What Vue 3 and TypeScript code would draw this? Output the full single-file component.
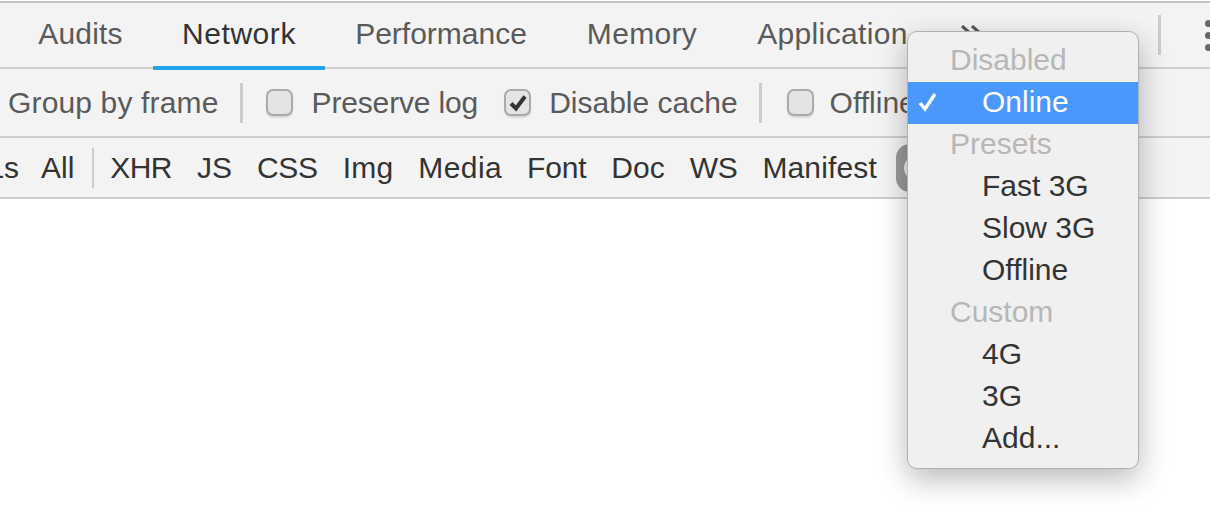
<script setup lang="ts">
interface MenuRow { label: string; kind: 'head' | 'item' | 'active' }
interface Tab { label: string; width: number; spacing: number }
interface Filter { label: string; spacing: number }
const tabs: Tab[] = [
  { label: 'Audits', width: 145, spacing: 0.15 },
  { label: 'Network', width: 172, spacing: 0.55 },
  { label: 'Performance', width: 232, spacing: 0 },
  { label: 'Memory', width: 170, spacing: 0.33 },
  { label: 'Application', width: 211, spacing: 0.36 },
]
const filters: Filter[] = [
  { label: 'XHR', spacing: -0.6 },
  { label: 'JS', spacing: 0 },
  { label: 'CSS', spacing: -0.3 },
  { label: 'Img', spacing: 0.2 },
  { label: 'Media', spacing: 0.4 },
  { label: 'Font', spacing: -0.2 },
  { label: 'Doc', spacing: 0 },
  { label: 'WS', spacing: -0.3 },
  { label: 'Manifest', spacing: 0.15 },
]
const rows: MenuRow[] = [
  { label: 'Disabled', kind: 'head' },
  { label: 'Online', kind: 'active' },
  { label: 'Presets', kind: 'head' },
  { label: 'Fast 3G', kind: 'item' },
  { label: 'Slow 3G', kind: 'item' },
  { label: 'Offline', kind: 'item' },
  { label: 'Custom', kind: 'head' },
  { label: '4G', kind: 'item' },
  { label: '3G', kind: 'item' },
  { label: 'Add...', kind: 'item' },
]
</script>

<template>
  <div class="page">
    <div class="tabbar">
      <div
        v-for="t in tabs"
        :key="t.label"
        class="tab"
        :class="{ selected: t.label === 'Network' }"
        :style="{ width: t.width + 'px', letterSpacing: t.spacing + 'px' }"
      >{{ t.label }}</div>
      <svg class="more" width="26" height="16" viewBox="0 0 26 16">
        <path d="M2 1l8 7-8 7M12 1l8 7-8 7" fill="none" stroke="#555" stroke-width="3" />
      </svg>
      <div class="vdiv top-div"></div>
      <div class="dots"><i></i><i></i><i></i></div>
    </div>

    <div class="toolbar">
      <span class="group-label">Group by frame</span>
      <div class="vdiv tool-div"></div>
      <label class="check first">
        <span class="box"></span>
        <span class="tight">Preserve log</span>
      </label>
      <label class="check second">
        <span class="box">
          <svg width="20" height="18" viewBox="0 0 20 18">
            <path d="M3 9.5l5 5L17 2.5" fill="none" stroke="#333" stroke-width="4" />
          </svg>
        </span>
        <span>Disable cache</span>
      </label>
      <div class="vdiv tool-div2"></div>
      <label class="check third">
        <span class="box"></span>
        <span>Offline</span>
      </label>
    </div>

    <div class="filterbar">
      <span class="clip">URLs</span>
      <span class="all">All</span>
      <div class="vdiv filter-div"></div>
      <span
        v-for="f in filters"
        :key="f.label"
        class="filter"
        :style="{ letterSpacing: f.spacing + 'px' }"
      >{{ f.label }}</span>
      <div class="pill"><span class="knob"></span></div>
    </div>

    <div class="menu">
      <div
        v-for="r in rows"
        :key="r.label"
        class="row"
        :class="r.kind"
      >
        <svg v-if="r.kind === 'active'" class="tick" width="22" height="22" viewBox="0 0 22 22">
          <path d="M3 12l5 6L18 3" fill="none" stroke="#fff" stroke-width="3.4" />
        </svg>
        {{ r.label }}
      </div>
    </div>
  </div>
</template>

<style scoped>
.page {
  position: relative;
  width: 1210px;
  height: 508px;
  overflow: hidden;
  background: #fff;
  font-family: "Liberation Sans", Arial, sans-serif;
  font-size: 30px;
  box-sizing: border-box;
  padding-top: 1px;
}
.tabbar {
  display: flex;
  align-items: stretch;
  height: 68px;
  box-sizing: border-box;
  padding-left: 8px;
  background: #f3f3f3;
  border-top: 2px solid #c4c4c4;
  border-bottom: 2px solid #cdcdcd;
  color: #5a5a5a;
}
.tab {
  flex: none;
  text-align: center;
  line-height: 62px;
  height: 67px;
  box-sizing: border-box;
  white-space: nowrap;
}
.tab.selected {
  color: #333;
  border-bottom: 4px solid #1fa5ee;
}
.more {
  flex: none;
  align-self: flex-start;
  margin: 22px 0 0 22px;
}
.vdiv {
  width: 3px;
  background: #cccccc;
  flex: none;
}
.top-div {
  height: 40px;
  align-self: flex-start;
  margin: 12px 0 0 172px;
}
.dots {
  display: flex;
  flex-direction: column;
  gap: 5px;
  margin: 17px 0 0 44px;
}
.dots i {
  display: block;
  width: 7px;
  height: 7px;
  border-radius: 50%;
  background: #666;
}
.toolbar {
  display: flex;
  align-items: center;
  height: 69px;
  box-sizing: border-box;
  padding: 0 0 0 8px;
  background: #f3f3f3;
  border-bottom: 2px solid #cdcdcd;
  color: #5a5a5a;
  white-space: nowrap;
}
.group-label { letter-spacing: 0.15px; }
.tight { letter-spacing: -0.15px; }
.tool-div {
  height: 40px;
  margin-left: 21px;
}
.tool-div2 {
  height: 40px;
  margin-left: 21px;
}
.check {
  display: flex;
  align-items: center;
  gap: 18px;
}
.check.first { margin-left: 23px; gap: 19px; }
.check.second { margin-left: 26px; gap: 18px; }
.check.third { margin-left: 25px; gap: 16px; }
.box {
  display: flex;
  align-items: center;
  justify-content: center;
  width: 27px;
  height: 27px;
  box-sizing: border-box;
  border: 2px solid #aaa;
  border-radius: 7px;
  background: #e4e4e4;
  box-shadow: 0 2px 1px rgba(0, 0, 0, 0.1);
}
.filterbar {
  display: flex;
  align-items: center;
  height: 61px;
  box-sizing: border-box;
  background: #f3f3f3;
  border-bottom: 2px solid #cdcdcd;
  color: #333;
  white-space: nowrap;
}
.clip { margin-left: -56px; }
.all { margin-left: 22px; }
.filter-div {
  width: 2px;
  height: 40px;
  margin: 0 16px 0 18px;
}
.filter { margin-right: 25px; }
.pill {
  flex: none;
  position: relative;
  width: 90px;
  height: 48px;
  margin-left: -6px;
  border-radius: 14px;
  background: #999;
}
.knob {
  position: absolute;
  left: 8px;
  top: 12px;
  width: 24px;
  height: 24px;
  border-radius: 50%;
  background: #e3eef6;
}
.menu {
  position: absolute;
  left: 907px;
  top: 31px;
  width: 232px;
  height: 438px;
  box-sizing: border-box;
  padding-top: 8px;
  background: #f0f0f0;
  border: 1px solid #b0b0b0;
  border-radius: 10px;
  box-shadow: 0 10px 30px rgba(0, 0, 0, 0.28);
  color: #333;
}
.row {
  position: relative;
  height: 42px;
  line-height: 39px;
  padding-left: 74px;
  white-space: nowrap;
}
.row.head {
  padding-left: 42px;
  color: #b7b7b7;
}
.row.active {
  background: #4a98fb;
  color: #fff;
}
.tick {
  position: absolute;
  left: 9px;
  top: 9px;
}
</style>
